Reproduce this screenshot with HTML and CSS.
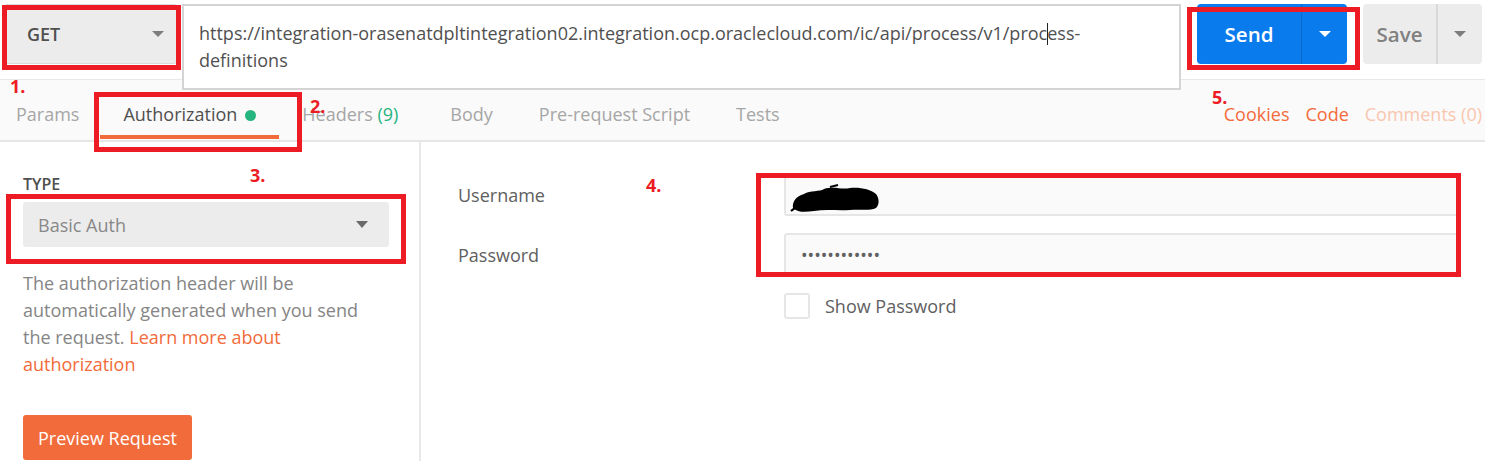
FILE: index.html
```html
<!DOCTYPE html>
<html lang="en">
<head>
<meta charset="utf-8">
<title>Postman Authorization</title>
<link rel="stylesheet" href="styles.css">
</head>
<body>
<div class="page">
  <div class="topbar">
    <div class="method">
      <span class="method-label">GET</span>
      <svg class="caret-down" width="12" height="6" viewBox="0 0 12 6"><path d="M0 0H12L6 6Z" fill="#7d7d7d"/></svg>
    </div>
    <div class="url">https://integration-orasenatdpltintegration02.integration.ocp.oraclecloud.com/ic/api/process/v1/proc<span class="cursor"></span>ess-<br>definitions</div>
    <div class="send">
      <span class="send-label">Send</span>
      <span class="send-drop"><svg width="12" height="6" viewBox="0 0 12 6"><path d="M0 0H12L6 6Z" fill="#ffffff"/></svg></span>
    </div>
    <div class="save">
      <span class="save-label">Save</span>
      <span class="save-drop"><svg width="12" height="6" viewBox="0 0 12 6"><path d="M0 0H12L6 6Z" fill="#7d7d7d"/></svg></span>
    </div>
  </div>

  <div class="tabbar">
    <div class="tab tab-first">Params</div>
    <div class="tab tab-active">Authorization<span class="dot"></span></div>
    <div class="tab tab-headers">Headers <span class="count">(9)</span></div>
    <div class="tab">Body</div>
    <div class="tab">Pre-request Script</div>
    <div class="tab">Tests</div>
    <div class="links">
      <span class="link">Cookies</span>
      <span class="link">Code</span>
      <span class="link link-muted">Comments (0)</span>
    </div>
  </div>

  <div class="content">
    <div class="left">
      <div class="type-label">TYPE</div>
      <div class="type-select">
        <span>Basic Auth</span>
        <svg width="12" height="7" viewBox="0 0 12 7"><path d="M0 0H12L6 7Z" fill="#6a6a6a"/></svg>
      </div>
      <p class="desc">The authorization header will be<br>automatically generated when you send<br>the request. <span class="desc-link">Learn more about<br>authorization</span></p>
      <div class="preview-btn">Preview Request</div>
    </div>
    <div class="right">
      <div class="field-label">Username</div>
      <div class="field field-user">
        <svg class="redact" width="90" height="30" viewBox="0 0 90 30"><path d="M3 24 C2 18 6 12 14 10 C20 6 30 8 34 5 C44 2 52 6 60 4 C70 3 80 5 86 10 C89 14 90 20 86 24 C80 27 70 25 60 26 C48 27 36 25 24 27 C16 28 8 29 3 24 Z" fill="#000"/><path d="M1 27 C6 22 12 24 18 26 M40 3 L48 1" stroke="#000" stroke-width="2" fill="none"/></svg>
      </div>
      <div class="field-label">Password</div>
      <div class="field field-pass">••••••••••••</div>
      <div class="check-row">
        <span class="checkbox"></span>
        <span class="check-label">Show Password</span>
      </div>
    </div>
  </div>

  <div class="mark mark-1"></div>
  <div class="mark mark-2"></div>
  <div class="mark mark-3"></div>
  <div class="mark mark-4"></div>
  <div class="mark mark-5"></div>
  <div class="num num-1">1.</div>
  <div class="num num-2">2.</div>
  <div class="num num-3">3.</div>
  <div class="num num-4">4.</div>
  <div class="num num-5">5.</div>
</div>
</body>
</html>
```

FILE: styles.css
```css
* { box-sizing: border-box; }
html, body { margin: 0; padding: 0; background: #ffffff; }
body {
  font-family: "Open Sans", "Noto Sans", sans-serif;
  font-size: 18px;
  color: #505050;
}
.page {
  position: relative;
  width: 1485px;
  height: 461px;
  overflow: hidden;
}

/* top bar */
.topbar {
  display: flex;
  align-items: flex-start;
  height: 79px;
  padding: 4px 0 0 4px;
}
.method {
  width: 173px;
  height: 60px;
  margin-right: 5px;
  background: #ececec;
  border: 1px solid #dadada;
  border-radius: 3px;
  display: flex;
  align-items: center;
  justify-content: space-between;
  padding: 0 12px 0 22px;
}
.method-label {
  font-size: 18px;
  font-weight: 600;
  color: #505050;
}
.url {
  position: relative;
  z-index: 2;
  width: 999px;
  height: 86px;
  margin-right: 16px;
  background: #ffffff;
  border: 2px solid #d4d4d4;
  padding: 14px 15px 0 15px;
  font-size: 18px;
  line-height: 27px;
  color: #505050;
  white-space: nowrap;
}
.cursor {
  display: inline-block;
  width: 1px;
  height: 22px;
  margin-right: -1px;
  background: #222;
  vertical-align: -5px;
}
.send {
  width: 150px;
  height: 60px;
  margin-right: 16px;
  background: #097bed;
  border-radius: 4px;
  display: flex;
  color: #ffffff;
}
.send-label {
  width: 104px;
  display: flex;
  align-items: center;
  justify-content: center;
  font-size: 20.5px;
  font-weight: 600;
}
.send-drop {
  flex: 1;
  border-left: 1px solid #0a68c9;
  display: flex;
  align-items: center;
  justify-content: center;
}
.save {
  width: 119px;
  height: 60px;
  background: #ececec;
  border-radius: 4px;
  display: flex;
  color: #808080;
}
.save-label {
  width: 73px;
  display: flex;
  align-items: center;
  justify-content: center;
  font-size: 20.5px;
  font-weight: 600;
}
.save-drop {
  flex: 1;
  border-left: 2px solid #d9d9d9;
  display: flex;
  align-items: center;
  justify-content: center;
}

/* tabs */
.tabbar {
  display: flex;
  height: 63px;
  background: #fafafa;
  border-top: 1px solid #e8e8e8;
  border-bottom: 2px solid #e6e6e6;
}
.tab {
  padding: 22px 23px 0 23px;
  height: 59px;
  line-height: 24px;
  color: #a6a6a6;
  white-space: nowrap;
  border-bottom: 4px solid transparent;
}
.tab-first { padding-left: 16px; padding-right: 21px; }
.tab-headers { padding-right: 29px; }
.tab-active {
  color: #505050;
  border-bottom-color: #f26b3a;
  display: flex;
  align-items: flex-start;
}
.dot {
  width: 11px;
  height: 11px;
  margin: 8px 0 0 8px;
  border-radius: 50%;
  background: #26b47f;
}
.count { color: #26b47f; }
.links {
  margin-left: auto;
  display: flex;
  gap: 16px;
  padding: 22px 3px 0 0;
  line-height: 24px;
  white-space: nowrap;
}
.link { color: #f26b3a; }
.link-muted { color: #f9c6af; }

/* content */
.content {
  display: flex;
  height: 319px;
}
.left {
  width: 421px;
  border-right: 2px solid #e8e8e8;
  padding: 31px 30px 0 23px;
}
.type-label {
  font-size: 16px;
  font-weight: 600;
  line-height: 22px;
  color: #505050;
}
.type-select {
  margin-top: 7px;
  height: 45px;
  background: #ececec;
  border-radius: 3px;
  display: flex;
  align-items: center;
  justify-content: space-between;
  padding: 0 21px 0 15px;
  color: #888888;
}
.desc {
  margin: 23px 0 0 0;
  line-height: 27px;
  color: #858585;
  white-space: nowrap;
}
.desc-link { color: #f26b3a; }
.preview-btn {
  display: inline-flex;
  align-items: center;
  margin-top: 37px;
  height: 45px;
  padding: 0 15px;
  background: #f26b3a;
  color: #ffffff;
  border-radius: 3px;
}
.right {
  flex: 1;
  padding: 31px 25px 0 37px;
  display: grid;
  grid-template-columns: 326px 1fr;
  grid-auto-rows: min-content;
  row-gap: 17px;
}
.field-label {
  display: flex;
  align-items: center;
  color: #606060;
}
.field {
  height: 43px;
  background: #fafafa;
  border: 2px solid #e6e6e6;
  border-radius: 3px;
  display: flex;
  align-items: center;
}
.field-user { padding-left: 4px; }
.redact { margin-top: 9px; }
.field-pass {
  padding-left: 15px;
  color: #606060;
  font-size: 17.5px;
}
.check-row {
  grid-column: 2;
  display: flex;
  align-items: center;
  height: 26px;
}
.checkbox {
  width: 26px;
  height: 26px;
  border: 2px solid #e6e6e6;
  border-radius: 3px;
  background: #ffffff;
  margin-right: 15px;
}
.check-label { color: #606060; }

/* annotations */
.mark {
  position: absolute;
  border: 5px solid #ed1c24;
  z-index: 5;
}
.mark-1 { left: 2px; top: 5px; width: 179px; height: 65px; }
.mark-2 { left: 94px; top: 92px; width: 208px; height: 60px; }
.mark-3 { left: 6px; top: 194px; width: 400px; height: 70px; }
.mark-4 { left: 756px; top: 173px; width: 705px; height: 104px; }
.mark-5 { left: 1187px; top: 7px; width: 173px; height: 63px; }
.num {
  position: absolute;
  z-index: 6;
  color: #ed1c24;
  font-size: 18px;
  font-weight: 700;
  line-height: 18px;
}
.num-1 { left: 10px; top: 77px; }
.num-2 { left: 310px; top: 97px; }
.num-3 { left: 250px; top: 166px; }
.num-4 { left: 646px; top: 176px; }
.num-5 { left: 1212px; top: 88px; }
```
